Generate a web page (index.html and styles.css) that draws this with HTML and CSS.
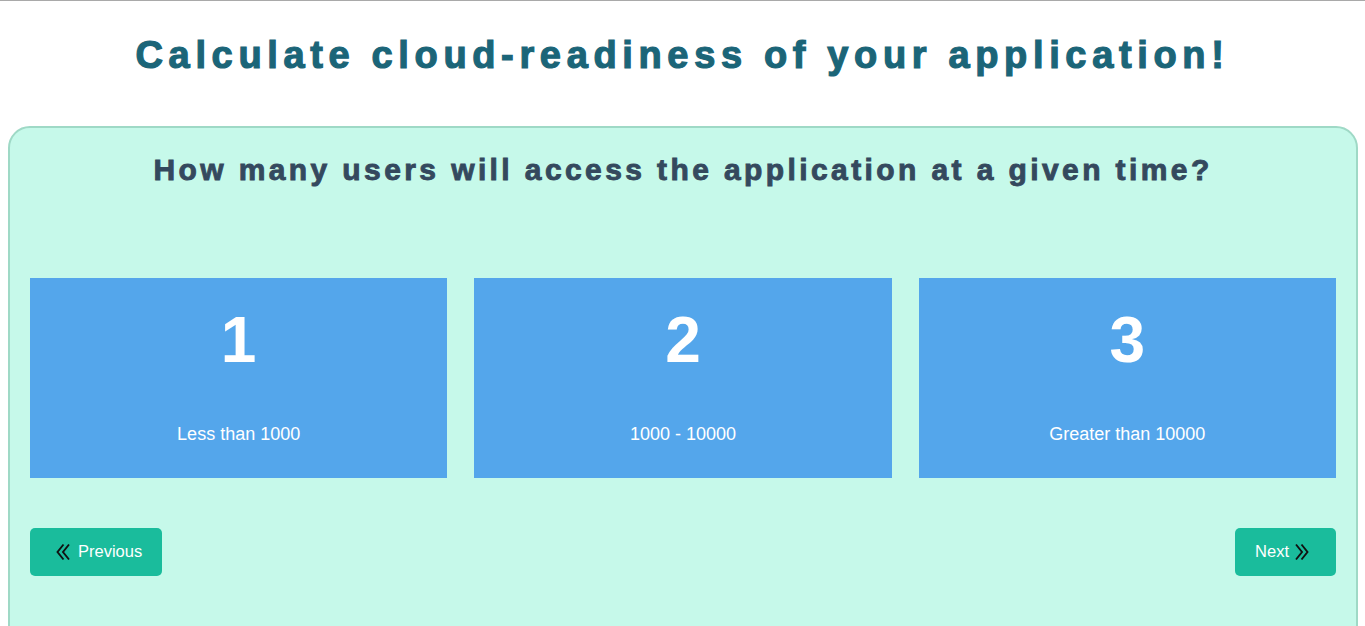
FILE: index.html
```html
<!DOCTYPE html>
<html>
<head>
<meta charset="utf-8">
<link rel="stylesheet" href="styles.css">
</head>
<body>
<div class="topline"></div>
<h1 class="title">Calculate cloud-readiness of your application!</h1>
<div class="card">
  <h2 class="question">How many users will access the application at a given time?</h2>
  <div class="options">
    <div class="option"><div class="num">1</div><div class="label">Less than 1000</div></div>
    <div class="option"><div class="num">2</div><div class="label">1000 - 10000</div></div>
    <div class="option"><div class="num">3</div><div class="label">Greater than 10000</div></div>
  </div>
  <div class="nav">
    <button class="btn prev"><svg class="chev" viewBox="0 0 16 18" width="16" height="18"><path d="M8.5 1.5 L2.5 9 L8.5 16.5 M14 1.5 L8 9 L14 16.5" fill="none" stroke="#111" stroke-width="1.9"/></svg>Previous</button>
    <button class="btn next">Next<svg class="chev" viewBox="0 0 16 18" width="16" height="18"><path d="M2 1.5 L8 9 L2 16.5 M7.5 1.5 L13.5 9 L7.5 16.5" fill="none" stroke="#111" stroke-width="1.9"/></svg></button>
  </div>
</div>
</body>
</html>
```
FILE: styles.css
```css
html, body { margin: 0; padding: 0; background: #fff; }
body { font-family: "Liberation Sans", Arial, sans-serif; overflow: hidden; height: 626px; }
.topline { height: 1px; background: #a9a9a9; }
.title {
  margin: 0; padding-top: 32px; height: 125px; box-sizing: border-box;
  text-align: center; color: #1b6578; font-size: 38px; font-weight: bold;
  letter-spacing: 5.65px; line-height: 44px; -webkit-text-stroke: 1.2px #1b6578;
}
.card {
  margin: 0 7px 0 8px; border: 2px solid #9fd9c6; border-radius: 22px;
  background: #c6f9ea; padding: 0 20px 60px; height: 600px; box-sizing: border-box;
}
.question {
  margin: 0; padding-top: 24px; text-align: center; color: #34495e;
  font-size: 30px; font-weight: bold; letter-spacing: 3.4px; line-height: 36px;
  -webkit-text-stroke: 0.9px #34495e;
}
.options {
  display: grid; grid-template-columns: repeat(3, 1fr); gap: 27px; margin-top: 90px;
}
.option {
  background: #54a6eb; height: 200px; color: #fff; text-align: center;
  display: flex; flex-direction: column; align-items: center;
}
.num { font-size: 64px; font-weight: bold; margin-top: 27px; line-height: 70px; }
.label { font-size: 18px; margin-top: 48px; line-height: 22px; }
.nav { display: flex; justify-content: space-between; margin-top: 50px; }
.btn {
  background: #1abc9c; border: none; border-radius: 5px; color: #fff;
  font-family: "Liberation Sans", Arial, sans-serif; font-size: 16.5px;
  height: 48px; display: flex; align-items: center; padding-bottom: 3px;
}
.prev { padding-left: 25px; padding-right: 20px; gap: 7px; }
.next { padding-left: 20px; padding-right: 26px; gap: 5px; }
.chev { display: block; margin-top: 2px; }
```
